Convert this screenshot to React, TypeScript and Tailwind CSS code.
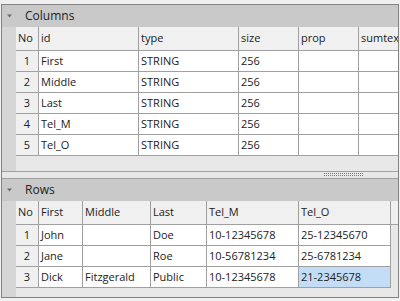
import React from "react";

const font = { fontFamily: '"Open Sans", "Noto Sans", sans-serif' };

function Tri() {
  return (
    <svg width="14" height="22" viewBox="0 0 14 22" className="shrink-0">
      <path d="M5 9.5 L10 9.5 L7.5 12.5 Z" fill="#6f6f6f" />
    </svg>
  );
}

function Grip() {
  const dots: React.ReactElement[] = [];
  for (let i = 0; i < 20; i++) {
    dots.push(<rect key={"a" + i} x={i * 2} y={1} width={1} height={1} fill="#7a7a7a" />);
    dots.push(<rect key={"b" + i} x={i * 2} y={3} width={1} height={1} fill="#7a7a7a" />);
  }
  return (
    <svg width="40" height="6" viewBox="0 0 40 6">
      {dots}
    </svg>
  );
}

const colRows = [
  ["1", "First", "STRING", "256"],
  ["2", "Middle", "STRING", "256"],
  ["3", "Last", "STRING", "256"],
  ["4", "Tel_M", "STRING", "256"],
  ["5", "Tel_O", "STRING", "256"],
];

const rowRows = [
  ["1", "John", "", "Doe", "10-12345678", "25-12345670"],
  ["2", "Jane", "", "Roe", "10-56781234", "25-6781234"],
  ["3", "Dick", "Fitzgerald", "Public", "10-12345678", "21-2345678"],
];

const colWidths = ["w-[23px]", "w-[100px]", "w-[100px]", "w-[60px]", "w-[60px]", "w-[60px]"];
const colHeads = ["No", "id", "type", "size", "prop", "sumtext"];
const rowWidths = ["w-[23px]", "w-[44px]", "w-[68px]", "w-[56px]", "w-[92px]", "w-[92px]"];
const rowHeads = ["No", "First", "Middle", "Last", "Tel_M", "Tel_O"];

export default function App() {
  return (
    <div className="w-[400px] h-[301px] bg-[#f0f0f0] pt-[4px] pl-[1px] overflow-hidden text-[#222222] text-[11px]" style={font}>
      <div className="w-[398px] h-[294px] border border-[#838383] flex flex-col overflow-hidden">
        {/* Columns header */}
        <div className="h-[22px] bg-[#c9c9c9] flex items-center shrink-0">
          <Tri />
          <span className="ml-[9px] leading-none text-[12px]">Columns</span>
        </div>
        {/* Columns body */}
        <div className="h-[144px] flex shrink-0">
          <div className="w-[14px] bg-[#d5d5d5] shrink-0" />
          <div className="flex-1 bg-[#e7e7e7] overflow-hidden">
            <div className="flex h-[24px] bg-[#f0f0f0] border-b border-[#a0a0a0] w-max">
              {colHeads.map((h, i) => (
                <div key={h} className={`${colWidths[i]} shrink-0 h-full border-r border-[#a0a0a0] pl-[2px] flex items-center whitespace-nowrap overflow-hidden`}>
                  {h}
                </div>
              ))}
            </div>
            {colRows.map((r) => (
              <div key={r[0]} className="flex h-[21px] border-b border-[#a0a0a0] w-max">
                <div className="w-[23px] shrink-0 h-full bg-[#f0f0f0] border-r border-[#a0a0a0] flex items-center justify-center">{r[0]}</div>
                <div className="w-[100px] shrink-0 h-full bg-white border-r border-[#a0a0a0] pl-[2px] flex items-center">{r[1]}</div>
                <div className="w-[100px] shrink-0 h-full bg-white border-r border-[#a0a0a0] pl-[2px] flex items-center">{r[2]}</div>
                <div className="w-[60px] shrink-0 h-full bg-white border-r border-[#a0a0a0] pl-[2px] flex items-center">{r[3]}</div>
                <div className="w-[60px] shrink-0 h-full bg-white border-r border-[#a0a0a0]" />
                <div className="w-[60px] shrink-0 h-full bg-white border-r border-[#a0a0a0]" />
              </div>
            ))}
          </div>
        </div>
        {/* Splitter */}
        <div className="h-[8px] border-y border-[#a0a0a0] bg-[#e7e7e7] shrink-0 flex">
          <div className="ml-[322px]">
            <Grip />
          </div>
        </div>
        {/* Rows header */}
        <div className="h-[22px] bg-[#c9c9c9] flex items-center shrink-0">
          <Tri />
          <span className="ml-[9px] leading-none text-[12px]">Rows</span>
        </div>
        {/* Rows body */}
        <div className="flex-1 flex">
          <div className="w-[14px] bg-[#d5d5d5] shrink-0" />
          <div className="flex-1 bg-[#e7e7e7] overflow-hidden">
            <div className="flex h-[24px] bg-[#f0f0f0] border-b border-[#a0a0a0]">
              {rowHeads.map((h, i) => (
                <div key={h} className={`${rowWidths[i]} shrink-0 h-full border-r border-[#a0a0a0] pl-[2px] flex items-center whitespace-nowrap`}>
                  {h}
                </div>
              ))}
            </div>
            {rowRows.map((r) => (
              <div key={r[0]} className="flex h-[21px] w-max border-b border-[#a0a0a0]">
                <div className="w-[23px] shrink-0 h-full bg-[#f0f0f0] border-r border-[#a0a0a0] flex items-center justify-center">{r[0]}</div>
                {r.slice(1).map((c, i) => {
                  const sel = r[0] === "3" && i === 4;
                  return (
                    <div
                      key={i}
                      className={`${rowWidths[i + 1]} shrink-0 h-full border-r border-[#a0a0a0] pl-[2px] flex items-center whitespace-nowrap ${sel ? "bg-[#c4ddf6]" : "bg-white"}`}
                    >
                      {c}
                    </div>
                  );
                })}
              </div>
            ))}
          </div>
        </div>
      </div>
    </div>
  );
}
